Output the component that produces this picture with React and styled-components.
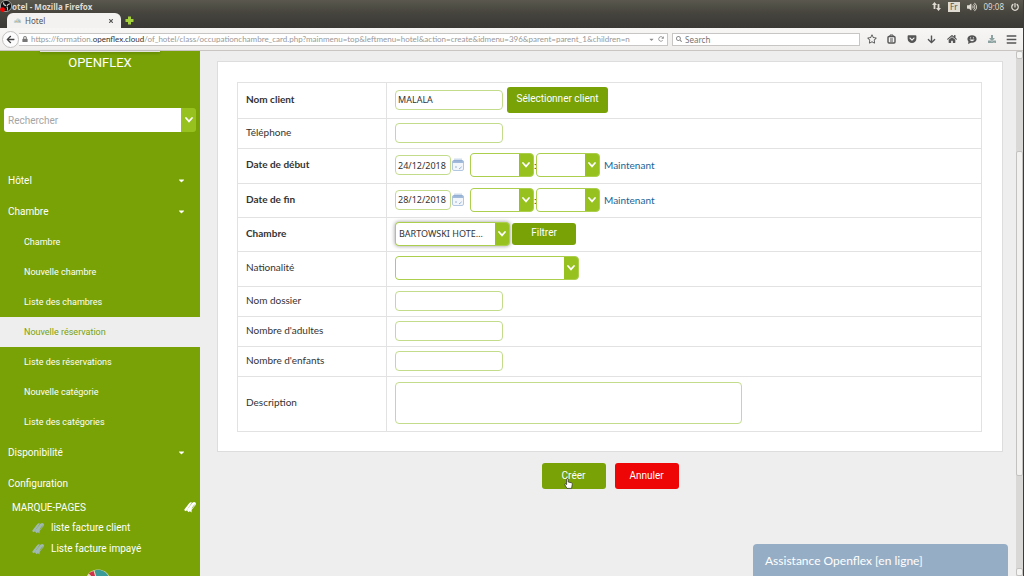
import React, { useState } from 'react';
import styled, { createGlobalStyle } from 'styled-components';
import {
  FaArrowDown, FaArrowLeft, FaBars, FaCaretDown, FaDownload, FaGetPocket, FaHome,
  FaLock, FaPowerOff, FaRegStar, FaSearch, FaTimes, FaVolumeUp,
} from 'react-icons/fa';
import { FaArrowRotateRight } from 'react-icons/fa6';

const roomLinks = [
  'Chambre',
  'Nouvelle chambre',
  'Liste des chambres',
  'Nouvelle réservation',
  'Liste des réservations',
  'Nouvelle catégorie',
  'Liste des catégories',
];

const bookmarks = ['liste facture client', 'Liste facture impayé'];

function Chevron() {
  return (
    <svg width="8" height="6" viewBox="0 0 8 6" aria-hidden="true">
      <path d="M1 1 L4 4.4 L7 1" fill="none" stroke="#fff" strokeWidth="1.7" strokeLinecap="round" />
    </svg>
  );
}

function BookmarkIcon({ size, color }) {
  return (
    <svg width={size} height={size} viewBox="0 0 12 12" aria-hidden="true">
      <path d="M0.3 8.4 L5.4 2 Q6.6 0.8 8 1.6 L3.8 7.4 V10.6 L2.6 9.6 L1 10.2 Z" fill={color} />
      <path d="M3.6 7.8 L8.4 1.8 Q10 0.4 11.4 1.4 Q12.4 2.4 11.6 4 L7.6 9 V11.4 L5.9 10.2 L4.2 11.2 Z" fill={color} />
      <path d="M8 7.4 L10.6 3.6" stroke="#78a206" strokeWidth="0.6" />
    </svg>
  );
}

function CalendarIcon() {
  return (
    <svg width="12" height="14" viewBox="0 0 12 14" aria-hidden="true">
      <rect x="0.5" y="2.5" width="11" height="10" rx="1.5" fill="#f3f6fb" stroke="#b4c7e0" />
      <path d="M0.5 5 V3.5 Q0.5 2 2 2 H10 Q11.5 2 11.5 3.5 V5 Z" fill="#a3bbdb" />
      <path d="M3 0.5 V3.4 M5 0.5 V3.4 M7 0.5 V3.4 M9 0.5 V3.4" stroke="#7c9cc9" strokeWidth="0.7" />
      <path d="M3 9 H5 M7 10.6 H8 L9.5 8.6" fill="none" stroke="#8fadd3" strokeWidth="0.9" />
    </svg>
  );
}

function ClipboardIcon() {
  return (
    <svg width="9" height="10" viewBox="0 0 9 10" aria-hidden="true">
      <rect x="1" y="2.5" width="7" height="6.5" rx="1" fill="none" stroke="currentColor" strokeWidth="1.4" />
      <path d="M3 2.5 V1 H6 V2.5 M3 5 H6 M3 7 H6" fill="none" stroke="currentColor" />
    </svg>
  );
}

function ChatIcon() {
  return (
    <svg width="10" height="9" viewBox="0 0 10 9" aria-hidden="true">
      <ellipse cx="5" cy="4" rx="4.6" ry="3.8" fill="currentColor" />
      <path d="M1.6 6 L1 9 L4.4 7.4 Z" fill="currentColor" />
      <path d="M2.4 4.4 Q5 8 7.6 4.4 Z" fill="#f3f2f1" />
      <circle cx="3.6" cy="2.8" r="0.6" fill="#f3f2f1" />
      <circle cx="6.4" cy="2.8" r="0.6" fill="#f3f2f1" />
    </svg>
  );
}

function HandCursor() {
  return (
    <svg width="9" height="11" viewBox="0 0 9 11" aria-hidden="true">
      <path
        d="M2.6 1.2 Q3.6 0.2 4.2 1.2 V4 L7.6 4.8 Q8.5 5.2 8.3 6.2 L7.6 10.4 H3 L0.8 6.8 Q0.6 5.8 1.6 5.8 L2.6 6.6 Z"
        fill="#fff" stroke="#333" strokeWidth="0.8"
      />
    </svg>
  );
}

function RecorderIcon() {
  return (
    <svg width="12" height="13" viewBox="0 0 12 13" aria-hidden="true">
      <circle cx="6" cy="6" r="5.6" fill="#111" stroke="#ddd" strokeWidth="0.6" />
      <path d="M3.5 2.4 Q3.4 5 6 5.6 M10 4 Q8 3.6 7 6 M7.2 10.4 Q8.4 8.2 6.8 6.6" fill="none" stroke="#ccc" strokeWidth="1.1" />
      <circle cx="2.6" cy="9.6" r="2.4" fill="#f00" />
    </svg>
  );
}

function PieLogo() {
  return (
    <svg width="32" height="26" viewBox="0 0 32 26" aria-hidden="true">
      <circle cx="14" cy="13" r="12.6" fill="#e7e0bd" />
      <path d="M14 13 L10.5 1.4 A12 12 0 0 1 26 13 Z" fill="#3a9b98" />
      <path d="M12.5 12 L4.8 4.6 A11 11 0 0 1 9.6 2 Z" fill="#d0314c" />
    </svg>
  );
}

function Dropdown({ label, width, focused, options = [''] }) {
  return (
    <SelectFrame $width={width} $focused={focused}>
      <select aria-label={label}>
        {options.map((option) => <option key={option}>{option}</option>)}
      </select>
      <SelectArrow><Chevron /></SelectArrow>
    </SelectFrame>
  );
}

function DateFields({ id, label, initial }) {
  const [date, setDate] = useState(initial);

  return (
    <FieldLine>
      <TextInput id={id} $width={56} value={date} onChange={(e) => setDate(e.target.value)} />
      <CalendarButton type="button" aria-label={`Calendrier ${label}`}><CalendarIcon /></CalendarButton>
      <Dropdown label={`${label} heures`} width={64} />
      <Colon>:</Colon>
      <Dropdown label={`${label} minutes`} width={64} />
      <NowLink href="#">Maintenant</NowLink>
    </FieldLine>
  );
}

function BrowserChrome() {
  return (
    <header>
      <TitleBar>
        <RecorderIcon />
        <WindowTitle>otel - Mozilla Firefox</WindowTitle>
        <Tray>
          <svg width="9" height="9" viewBox="0 0 9 9" aria-hidden="true">
            <path d="M2.5 0 L5 3 H3.4 V7 H1.6 V3 H0 Z M6.5 9 L9 6 H7.4 V2 H5.6 V6 H4 Z" fill="#dfdbd2" />
          </svg>
          <Lang>Fr</Lang>
          <FaVolumeUp size={10} />
          <span>09:08</span>
          <FaPowerOff size={8} />
        </Tray>
      </TitleBar>
      <TabStrip>
        <Tab>
          <svg width="9" height="8" viewBox="0 0 9 8" aria-hidden="true">
            <path d="M1 6 Q0 3 3 3 Q4 0 6.5 2 Q9 3 8 6 Z" fill="#c9d6d8" />
            <path d="M2 5 Q4 3 5 5.5" fill="none" stroke="#e2a54b" strokeWidth="0.8" />
            <path d="M5 4 Q7 3 7 5.5" fill="none" stroke="#76a9b8" strokeWidth="0.8" />
          </svg>
          <TabTitle>Hotel</TabTitle>
          <FaTimes size={6} />
        </Tab>
        <NewTab type="button" aria-label="Nouvel onglet">
          <svg width="9" height="9" viewBox="0 0 9 9" aria-hidden="true">
            <path d="M3 0.5 H6 V3 H8.5 V6 H6 V8.5 H3 V6 H0.5 V3 H3 Z" fill="#a5d13a" />
          </svg>
        </NewTab>
      </TabStrip>
      <NavBar>
        <BackButton type="button" aria-label="Retour"><FaArrowLeft size={9} /></BackButton>
        <UrlBar>
          <FaLock size={6} color="#777" />
          <Url>
            https://formation.<b>openflex.cloud</b>/of_hotel/class/occupationchambre_card.php?mainmenu=top&amp;leftmenu=hotel&amp;action=create&amp;idmenu=396&amp;parent=parent_1&amp;children=n
          </Url>
          <FaCaretDown size={7} />
          <FaArrowRotateRight size={6} />
        </UrlBar>
        <SearchBar>
          <FaSearch size={6} />
          <input aria-label="Search" placeholder="Search" />
        </SearchBar>
        <NavIcons>
          <FaRegStar size={10} />
          <ClipboardIcon />
          <FaGetPocket size={10} />
          <FaArrowDown size={9} />
          <FaHome size={10} />
          <ChatIcon />
          <FaDownload size={8} color="#8ba2a0" />
          <FaBars size={11} />
        </NavIcons>
      </NavBar>
    </header>
  );
}

function Sidebar() {
  return (
    <SideNav>
      <Brand>OPENFLEX</Brand>
      <SideSearch>
        <input aria-label="Rechercher" placeholder="Rechercher" />
        <button type="button" aria-label="Choisir"><Chevron /></button>
      </SideSearch>
      <MenuItem href="#">Hôtel <FaCaretDown size={9} /></MenuItem>
      <MenuItem href="#">Chambre <FaCaretDown size={9} /></MenuItem>
      {roomLinks.map((text) => (
        <SubItem key={text} href="#" $active={text === 'Nouvelle réservation'}>{text}</SubItem>
      ))}
      <MenuItem href="#">Disponibilité <FaCaretDown size={9} /></MenuItem>
      <MenuItem href="#">Configuration</MenuItem>
      <BookmarkTitle>MARQUE-PAGES <BookmarkIcon size={12} color="#fff" /></BookmarkTitle>
      {bookmarks.map((text) => (
        <Bookmark key={text} href="#"><BookmarkIcon size={12} color="#a0b8b4" />{text}</Bookmark>
      ))}
      <LogoLine><PieLogo /></LogoLine>
    </SideNav>
  );
}

function ReservationForm() {
  const [client, setClient] = useState('MALALA');

  return (
    <form onSubmit={(e) => e.preventDefault()}>
      <Card>
        <FormTable>
          <tbody>
            <Row $height={36}>
              <LabelCell $required><label htmlFor="client">Nom client</label></LabelCell>
              <td>
                <FieldLine>
                  <TextInput id="client" value={client} onChange={(e) => setClient(e.target.value)} />
                  <Button type="button" $width={101}>Sélectionner client</Button>
                </FieldLine>
              </td>
            </Row>
            <Row $height={30}>
              <LabelCell><label htmlFor="phone">Téléphone</label></LabelCell>
              <td><TextInput id="phone" /></td>
            </Row>
            <Row $height={35}>
              <LabelCell $required><label htmlFor="start">Date de début</label></LabelCell>
              <td><DateFields id="start" label="Date de début" initial="24/12/2018" /></td>
            </Row>
            <Row $height={34}>
              <LabelCell $required><label htmlFor="end">Date de fin</label></LabelCell>
              <td><DateFields id="end" label="Date de fin" initial="28/12/2018" /></td>
            </Row>
            <Row $height={34}>
              <LabelCell $required>Chambre</LabelCell>
              <td>
                <FieldLine $gap={2}>
                  <Dropdown label="Chambre" width={115} focused options={['BARTOWSKI HOTE…']} />
                  <Button type="button" $height={22}>Filtrer</Button>
                </FieldLine>
              </td>
            </Row>
            <Row $height={35}>
              <LabelCell>Nationalité</LabelCell>
              <td><Dropdown label="Nationalité" width={184} /></td>
            </Row>
            <Row $height={30}>
              <LabelCell><label htmlFor="folder">Nom dossier</label></LabelCell>
              <td><TextInput id="folder" /></td>
            </Row>
            <Row $height={30}>
              <LabelCell><label htmlFor="adults">Nombre d'adultes</label></LabelCell>
              <td><TextInput id="adults" /></td>
            </Row>
            <Row $height={30}>
              <LabelCell><label htmlFor="children">Nombre d'enfants</label></LabelCell>
              <td><TextInput id="children" /></td>
            </Row>
            <Row $height={55}>
              <LabelCell><label htmlFor="description">Description</label></LabelCell>
              <td><TextArea id="description" /></td>
            </Row>
          </tbody>
        </FormTable>
      </Card>
      <Actions>
        <Button type="submit">Créer<Pointer><HandCursor /></Pointer></Button>
        <Button type="button" $danger>Annuler</Button>
      </Actions>
    </form>
  );
}

function App() {
  return (
    <Window>
      <GlobalStyle />
      <BrowserChrome />
      <Page>
        <MenuEdge />
        <Sidebar />
        <Main>
          <ReservationForm />
          <ChatTab type="button">Assistance Openflex [en ligne]</ChatTab>
        </Main>
        <Scrollbar>
          <ScrollButton />
          <ScrollThumb />
          <ScrollButton />
        </Scrollbar>
      </Page>
    </Window>
  );
}

export default App;

const GlobalStyle = createGlobalStyle`
  * { box-sizing: border-box; }
  body { margin: 0; }
  input, select, button, textarea { font: inherit; color: inherit; }
  a { text-decoration: none; }
  svg { flex: none; display: block; }
`;

const Window = styled.div`
  display: flex;
  flex-direction: column;
  height: 100vh;
  overflow: hidden;
  border-right: 1px solid #3c3b37;
  font-family: Roboto, sans-serif;
  font-size: 10px;
  color: #333;
`;

const TitleBar = styled.div`
  display: flex;
  align-items: center;
  height: 13px;
  background: linear-gradient(#5a584e, #45443d);
  color: #dfdbd2;
  font-family: 'Noto Sans', sans-serif;
  font-size: 8px;
`;

const WindowTitle = styled.span`
  flex: 1;
  font-weight: 700;
`;

const Tray = styled.div`
  display: flex;
  align-items: center;
  gap: 7px;
  padding-right: 4px;
`;

const Lang = styled.span`
  padding: 0 2px;
  background: #dfdbd2;
  color: #55534a;
  line-height: 10px;
`;

const TabStrip = styled.div`
  display: flex;
  align-items: center;
  height: 15px;
  padding-left: 7px;
  background: linear-gradient(#45443d, #3a3935);
`;

const Tab = styled.div`
  display: flex;
  align-items: center;
  width: 114px;
  height: 15px;
  padding: 0 7px 0 6px;
  border-radius: 6px 6px 0 0;
  background: #f3f2f1;
  color: #555;
  font-family: 'Noto Sans', sans-serif;
  font-size: 8px;
`;

const TabTitle = styled.span`
  flex: 1;
  padding-left: 3px;
`;

const NewTab = styled.button`
  padding: 0 4px;
  border: 0;
  background: none;
`;

const NavBar = styled.div`
  display: flex;
  align-items: center;
  height: 23px;
  padding: 0 6px 0 2px;
  border-bottom: 1px solid #c9c5c3;
  background: linear-gradient(#f7f6f5, #efeeed);
  color: #8a8a8a;
  font-family: 'Noto Sans', sans-serif;
  font-size: 8px;
`;

const BackButton = styled.button`
  display: flex;
  align-items: center;
  justify-content: center;
  width: 17px;
  height: 17px;
  padding: 0;
  border: 1px solid #c4c2c0;
  border-radius: 50%;
  background: #fcfcfc;
  color: #444;
`;

const UrlBar = styled.div`
  display: flex;
  flex: 1;
  align-items: center;
  gap: 3px;
  height: 13px;
  min-width: 0;
  padding: 0 3px;
  border: 1px solid #c8c6c4;
  border-left: 0;
  background: #fff;
`;

const Url = styled.span`
  flex: 1;
  overflow: hidden;
  white-space: nowrap;
  color: #999;
  font-family: Lato, sans-serif;

  b {
    color: #333;
    font-weight: 400;
  }
`;

const SearchBar = styled.label`
  display: flex;
  align-items: center;
  gap: 3px;
  width: 188px;
  height: 13px;
  margin-left: 4px;
  padding-left: 3px;
  border: 1px solid #c8c6c4;
  background: #fff;

  input {
    width: 100%;
    padding: 0;
    border: 0;
    outline: 0;
    background: none;
  }
`;

const NavIcons = styled.div`
  display: flex;
  align-items: center;
  justify-content: space-between;
  width: 150px;
  margin-left: 7px;
  color: #555;
`;

const Page = styled.div`
  position: relative;
  display: flex;
  flex: 1;
  min-height: 0;
  background: #eee;
`;

/* bottom of the page's top menu, sticking out over the sidebar */
const MenuEdge = styled.div`
  position: absolute;
  top: 0;
  left: 40px;
  width: 120px;
  height: 1px;
  background: #e4e4e0;
  box-shadow: 0 1px 3px rgba(0, 0, 0, 0.4);
`;

const SideNav = styled.nav`
  display: flex;
  flex-direction: column;
  flex: none;
  width: 200px;
  overflow: hidden;
  background: #78a206;
  color: #fff;
`;

const Brand = styled.div`
  padding-top: 4px;
  font-size: 13px;
  line-height: 15px;
  text-align: center;
`;

const SideSearch = styled.div`
  display: flex;
  flex: none;
  height: 24px;
  margin: 38px 4px 33px;
  border-radius: 3px;
  overflow: hidden;

  input {
    flex: 1;
    min-width: 0;
    padding: 0 4px;
    border: 0;
    background: #fff;
    color: #555;
  }
  input::placeholder {
    color: #a5a5a5;
  }
  button {
    display: flex;
    align-items: center;
    justify-content: center;
    width: 15px;
    padding: 0;
    border: 0;
    background: #97c11f;
  }
`;

const MenuItem = styled.a`
  display: flex;
  flex: none;
  align-items: center;
  justify-content: space-between;
  height: 31px;
  padding: 0 14px 0 8px;
  color: #fff;
`;

const SubItem = styled.a`
  flex: none;
  padding-left: 24px;
  background: ${({ $active }) => ($active ? '#eee' : 'transparent')};
  color: ${({ $active }) => ($active ? '#78a206' : '#fff')};
  font-size: 9px;
  line-height: 30px;
`;

const BookmarkTitle = styled.div`
  display: flex;
  flex: none;
  align-items: center;
  justify-content: space-between;
  height: 18px;
  padding: 0 4px 2px 12px;
`;

const Bookmark = styled.a`
  display: flex;
  flex: none;
  align-items: center;
  gap: 7px;
  height: 21px;
  padding-left: 32px;
  color: #fff;
`;

const LogoLine = styled.div`
  display: flex;
  flex: none;
  justify-content: center;
  padding-top: 10px;
`;

const Main = styled.main`
  position: relative;
  flex: 1;
  min-width: 0;
  padding: 10px 13px 0 17px;
`;

const Card = styled.div`
  padding: 20px 20px 19px 19px;
  border: 1px solid #ddd;
  background: #fff;
`;

const FormTable = styled.table`
  width: 100%;
  border: 1px solid #e2e2e2;
  border-collapse: collapse;
  font-family: Lato, sans-serif;

  td, th {
    padding: 0 8px 2px;
    border-bottom: 1px solid #e2e2e2;
  }
  th {
    padding-bottom: 4px;
  }
`;

const Row = styled.tr`
  height: ${({ $height }) => $height}px;
`;

const LabelCell = styled.th`
  width: 149px;
  border-right: 1px solid #e2e2e2;
  font-weight: ${({ $required }) => ($required ? 700 : 400)};
  text-align: left;
`;

const FieldLine = styled.div`
  display: flex;
  align-items: center;
  gap: ${({ $gap = 4 }) => ($gap)}px;
`;

const TextInput = styled.input`
  display: block;
  width: ${({ $width = 108 }) => $width}px;
  height: 20px;
  padding: 0 2px;
  border: 1px solid #c3dc8c;
  border-radius: 4px;
  font-family: 'Noto Sans', sans-serif;
  font-size: 9px;
`;

const TextArea = styled.textarea`
  display: block;
  width: 347px;
  height: 42px;
  border: 1px solid #c3dc8c;
  border-radius: 4px;
  resize: none;
`;

const SelectFrame = styled.div`
  display: flex;
  width: ${({ $width }) => $width}px;
  height: 24px;
  border: 1px solid #acd04e;
  border-radius: 4px;
  background: #97c11f;
  box-shadow: ${({ $focused }) => ($focused ? '0 0 4px rgba(0, 0, 0, 0.4)' : 'none')};
  overflow: hidden;

  select {
    flex: 1;
    min-width: 0;
    padding: 0 3px;
    border: 0;
    border-radius: 0;
    appearance: none;
    background: #fff;
    font-family: 'Noto Sans', sans-serif;
    font-size: 9px;
  }
`;

const SelectArrow = styled.span`
  display: flex;
  align-items: center;
  justify-content: center;
  width: 14px;
`;

const CalendarButton = styled.button`
  margin: 0 2px 0 -3px;
  padding: 0;
  border: 0;
  background: none;
`;

const Colon = styled.span`
  width: 2px;
  margin: 0 -4px;
`;

const NowLink = styled.a`
  color: #1a6496;
`;

const Button = styled.button`
  position: relative;
  width: ${({ $width = 64 }) => $width}px;
  height: ${({ $height = 26 }) => $height}px;
  padding: 0 0 2px;
  border: 0;
  border-radius: 3px;
  background: ${({ $danger }) => ($danger ? '#ee0505' : '#78a206')};
  color: #fff;
  font-family: Roboto, sans-serif;
  font-size: 10px;
`;

const Pointer = styled.span`
  position: absolute;
  left: 22px;
  bottom: 0;
`;

const Actions = styled.div`
  display: flex;
  justify-content: center;
  gap: 9px;
  padding-top: 11px;
`;

const ChatTab = styled.button`
  position: absolute;
  right: 8px;
  bottom: 0;
  width: 255px;
  height: 32px;
  padding: 0 12px;
  border: 0;
  border-radius: 4px 4px 0 0;
  background: #95adc5;
  color: #fff;
  font-family: Lato, sans-serif;
  font-size: 12px;
  text-align: left;
`;

const Scrollbar = styled.div`
  display: flex;
  flex-direction: column;
  justify-content: space-between;
  width: 7px;
  background: #d9d8d6;
`;

const ScrollButton = styled.div`
  height: 8px;
  border: 1px solid #c4c2c0;
  border-radius: 2px;
  background: #f4f4f3;
`;

const ScrollThumb = styled.div`
  height: 62%;
  border: 1px solid #c4c2c0;
  border-radius: 2px;
  background: #f2f1f0;
`;
